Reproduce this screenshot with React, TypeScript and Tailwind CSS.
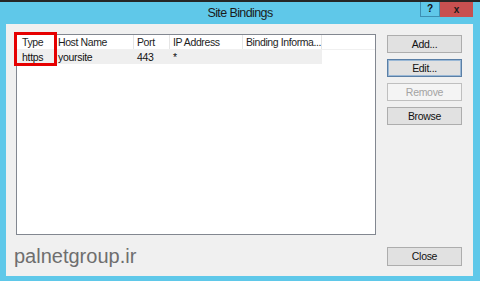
import React from "react";

const ui = { fontFamily: '"Liberation Sans", Arial, sans-serif' };

function Btn({ label, variant }: { label: string; variant?: "focus" | "disabled" }) {
  const base = "w-[75px] h-[18px] flex items-center justify-center text-[10.5px] tracking-[-0.3px] leading-none";
  if (variant === "disabled")
    return <div className={`${base} bg-[#f4f4f4] border border-[#bfbfbf] text-[#a3a3a3]`}>{label}</div>;
  if (variant === "focus")
    return (
      <div className={`${base} bg-[#e1e1e1] border border-[#5a7fa6] text-[#111] shadow-[inset_0_0_0_1px_#9ab8d6]`}>
        {label}
      </div>
    );
  return <div className={`${base} bg-[#e1e1e1] border border-[#adadad] text-[#111]`}>{label}</div>;
}

const cols = [
  { w: "w-[39px]", h: "Type", v: "https", p: "pl-[5px]" },
  { w: "w-[78px]", h: "Host Name", v: "yoursite", p: "pl-[2px]" },
  { w: "w-[36px]", h: "Port", v: "443", p: "pl-[3px]" },
  { w: "w-[73px]", h: "IP Address", v: "*", p: "pl-[3px]" },
  { w: "w-[79px]", h: "Binding Informa...", v: "", p: "pl-[3px]" },
];

export default function App() {
  return (
    <div className="w-[480px] h-[281px] bg-[#5fc8e9] flex flex-col border-t-[2px] border-[#262626] overflow-hidden" style={ui}>
      <div className="h-[22px] grid grid-cols-[1fr_auto_1fr]">
        <div />
        <div className="pt-[4px] text-[12.5px] tracking-[-0.6px] leading-[15px] text-[#1b1b1b]">Site Bindings</div>
        <div className="flex justify-end pr-[7px]">
          <div className="w-[20px] h-[15px] bg-[#5fc8e9] border border-[#3d8fb3] border-t-0 flex items-center justify-center text-[10px] font-bold text-[#111] leading-none">
            ?
          </div>
          <div className="w-[33px] h-[15px] bg-[#c75050] flex items-center justify-center text-[10px] font-bold text-[#1a1a1a] leading-none">
            x
          </div>
        </div>
      </div>
      <div className="flex-1 ml-[6px] mr-[7px] mb-[5px] bg-[#f0f0f0] flex">
        <div className="pl-[10px] pt-[10px] flex flex-col">
          <div className="relative w-[360px] h-[201px] bg-white border border-[#828790]">
            <div className="flex h-[15px] border-b border-[#f0f0f0] text-[10.5px] tracking-[-0.4px] text-[#1e1e1e]">
              {cols.map((c) => (
                <div key={c.h} className={`${c.w} ${c.p} border-r border-[#e5e5e5] flex items-center whitespace-nowrap overflow-hidden leading-none`}>
                  {c.h}
                </div>
              ))}
            </div>
            <div className="flex h-[14px] text-[10.5px] tracking-[-0.3px] text-[#111]">
              {cols.map((c) => (
                <div key={c.h} className={`${c.w} ${c.p} bg-[#efefef] flex items-center leading-none`}>
                  {c.v}
                </div>
              ))}
            </div>
            <div className="absolute left-[-3px] top-[-3px] w-[43px] h-[34px] border-[3px] border-[#e60000]" />
          </div>
          <div className="mt-[10px] -ml-[2px] text-[20px] leading-[23px] text-[#6e6e6e]">palnetgroup.ir</div>
        </div>
        <div className="ml-[11px] pt-[11px] pb-[10px] flex flex-col">
          <div className="flex flex-col gap-[6px]">
            <Btn label="Add..." />
            <Btn label="Edit..." variant="focus" />
            <Btn label="Remove" variant="disabled" />
            <Btn label="Browse" />
          </div>
          <div className="mt-auto">
            <div className="w-[75px] h-[19px] flex items-center justify-center text-[10.5px] tracking-[-0.3px] leading-none bg-[#e1e1e1] border border-[#adadad] text-[#111]">
              Close
            </div>
          </div>
        </div>
      </div>
    </div>
  );
}
